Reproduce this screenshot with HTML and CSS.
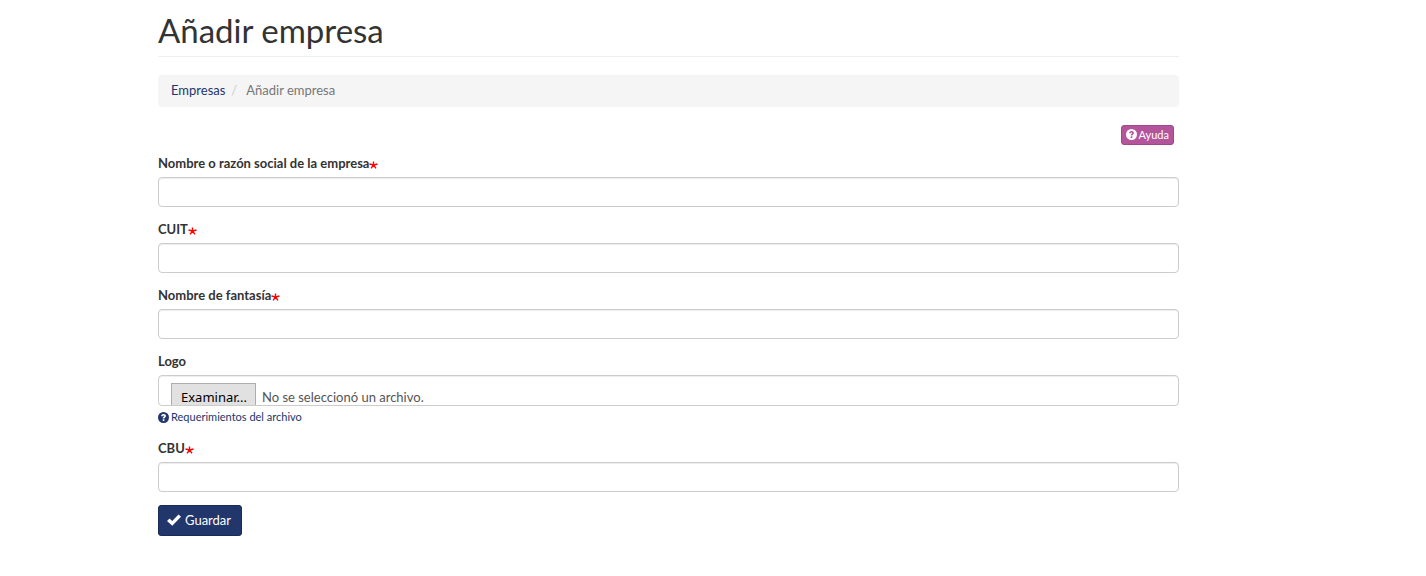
FILE: index.html
```html
<!DOCTYPE html>
<html lang="es">
<head>
  <meta charset="UTF-8">
  <meta name="viewport" content="width=device-width, initial-scale=1">
  <title>Añadir empresa</title>
  <link rel="stylesheet" href="styles.css">
</head>
<body>

  <div class="container">
    <h1 class="page-header">Añadir empresa</h1>

    <ol class="breadcrumb">
      <li><a href="#">Empresas</a></li>
      <li class="active">Añadir empresa</li>
    </ol>

    <div class="toolbar">
      <button type="button" class="btn btn-help">
        <svg class="icon" viewBox="0 0 16 16" aria-hidden="true">
          <circle cx="8" cy="8" r="8" fill="currentColor"/>
          <path class="icon-mark" d="M4.600 6.300C4.600 4 6 2.800 8.100 2.800s3.500 1.200 3.500 3c0 2.100-2.300 2.100-2.300 3.700H6.900c0-2.700 2.200-2.400 2.200-3.600 0-.6-.4-.9-1-.9-.7 0-1 .4-1 1.300zM6.900 10.600h2.400v2.400H6.900z"/>
        </svg>
        Ayuda
      </button>
    </div>

    <form action="#" method="post" enctype="multipart/form-data">
      <div class="form-group">
        <label for="razon-social">Nombre o razón social de la empresa<svg class="required" viewBox="0 0 9 8" aria-hidden="true"><path d="M4.500 4V.5M4.500 4 .5 3M4.500 4l4-1M4.500 4 2 7.300M4.500 4 7 7.300"/></svg></label>
        <input type="text" id="razon-social" name="razon_social" class="form-control" required>
      </div>

      <div class="form-group">
        <label for="cuit">CUIT<svg class="required" viewBox="0 0 9 8" aria-hidden="true"><path d="M4.500 4V.5M4.500 4 .5 3M4.500 4l4-1M4.500 4 2 7.300M4.500 4 7 7.300"/></svg></label>
        <input type="text" id="cuit" name="cuit" class="form-control" required>
      </div>

      <div class="form-group">
        <label for="fantasia">Nombre de fantasía<svg class="required" viewBox="0 0 9 8" aria-hidden="true"><path d="M4.500 4V.5M4.500 4 .5 3M4.500 4l4-1M4.500 4 2 7.300M4.500 4 7 7.300"/></svg></label>
        <input type="text" id="fantasia" name="nombre_fantasia" class="form-control" required>
      </div>

      <div class="form-group">
        <label for="logo">Logo</label>
        <div class="form-control file-control">
          <span class="file-button">Examinar...</span>
          <span class="file-name">No se seleccionó un archivo.</span>
          <input type="file" id="logo" name="logo">
        </div>
        <a href="#" class="help-link">
          <svg class="icon" viewBox="0 0 16 16" aria-hidden="true">
            <circle cx="8" cy="8" r="8" fill="currentColor"/>
            <path class="icon-mark" d="M4.600 6.300C4.600 4 6 2.800 8.100 2.800s3.500 1.200 3.500 3c0 2.100-2.300 2.100-2.300 3.700H6.900c0-2.700 2.200-2.400 2.200-3.600 0-.6-.4-.9-1-.9-.7 0-1 .4-1 1.300zM6.900 10.600h2.400v2.400H6.900z"/>
          </svg>
          Requerimientos del archivo
        </a>
      </div>

      <div class="form-group">
        <label for="cbu">CBU<svg class="required" viewBox="0 0 9 8" aria-hidden="true"><path d="M4.500 4V.5M4.500 4 .5 3M4.500 4l4-1M4.500 4 2 7.300M4.500 4 7 7.300"/></svg></label>
        <input type="text" id="cbu" name="cbu" class="form-control" required>
      </div>

      <button type="submit" class="btn btn-primary">
        <svg class="icon-ok" viewBox="0 0 14 12" aria-hidden="true">
          <path fill="currentColor" d="M0 7l2.500-2.500L5.200 7 11.500.5 14 2.800 5.300 11.800z"/>
        </svg>
        Guardar
      </button>
    </form>
  </div>

</body>
</html>
```

FILE: styles.css
```css
* {
  box-sizing: border-box;
}

body {
  margin: 0;
  padding: 0 247px 40px 158px;
  font-family: Lato, sans-serif;
  font-size: 13px;
  line-height: 18px;
  color: #333;
  background: #fff;
}

a {
  color: #21366b;
  text-decoration: none;
}

.page-header {
  margin: 0 0 18px;
  padding: 12px 0 8px;
  border-bottom: 1px solid #eee;
  font-size: 33px;
  font-weight: 400;
  line-height: 36px;
}

.breadcrumb {
  display: flex;
  margin: 0 0 18px;
  padding: 6px 13px 8px;
  list-style: none;
  background: #f5f5f5;
  border-radius: 4px;
}

.breadcrumb .active {
  color: #777;
}

.breadcrumb .active::before {
  content: "/";
  padding: 0 9px 0 6px;
  color: #ccc;
}

.toolbar {
  display: flex;
  justify-content: flex-end;
  margin-bottom: 9px;
  padding-right: 5px;
}

.btn {
  display: inline-flex;
  align-items: center;
  border: 1px solid;
  border-radius: 3px;
  font-family: inherit;
  color: #fff;
  cursor: pointer;
}

.btn-help {
  gap: 2px;
  height: 20px;
  padding: 0 4px 2px;
  font-size: 11px;
  background: #b4559b;
  border-color: #a0468a;
}

.btn-primary {
  gap: 4px;
  height: 31px;
  padding: 0 10px 2px 8px;
  font-size: 13px;
  background: #21366b;
  border-color: #1a2b57;
}

.icon {
  width: 11px;
  height: 11px;
}

.icon-mark {
  fill: #fff;
}

.btn-help .icon-mark {
  fill: #b4559b;
}

.icon-ok {
  width: 14px;
  height: 12px;
}

.form-group {
  margin-bottom: 13px;
}

.form-group label {
  display: block;
  margin-bottom: 5px;
  font-weight: bold;
}

.required {
  width: 9px;
  height: 8px;
  vertical-align: -1px;
  fill: none;
  stroke: #f00;
  stroke-width: 1.4;
}

.form-control {
  display: block;
  width: 100%;
  height: 30px;
  padding: 5px 12px;
  border: 1px solid #ccc;
  border-radius: 4px;
  font-family: inherit;
  font-size: 13px;
  color: #555;
  background: #fff;
  box-shadow: inset 0 1px 1px rgba(0, 0, 0, 0.075);
}

.form-control:focus,
.file-control:focus-within {
  border-color: #66afe9;
  outline: 0;
}

.file-control {
  display: flex;
  align-items: flex-start;
  gap: 6px;
  position: relative;
  height: 31px;
  padding-top: 7px;
  overflow: hidden;
}

.file-button {
  flex: none;
  height: 28px;
  padding: 0 8px 0 9px;
  border: 1px solid #adadad;
  font-family: "Noto Sans", sans-serif;
  line-height: 26px;
  color: #000;
  background: #e1e1e1;
}

.file-name {
  line-height: 28px;
}

/* real input lies over the drawn control and takes the clicks */
.file-control input {
  position: absolute;
  inset: 0;
  width: 100%;
  opacity: 0;
  cursor: pointer;
}

.help-link {
  display: flex;
  align-items: center;
  gap: 2px;
  padding-top: 2px;
  font-size: 11px;
}
```
